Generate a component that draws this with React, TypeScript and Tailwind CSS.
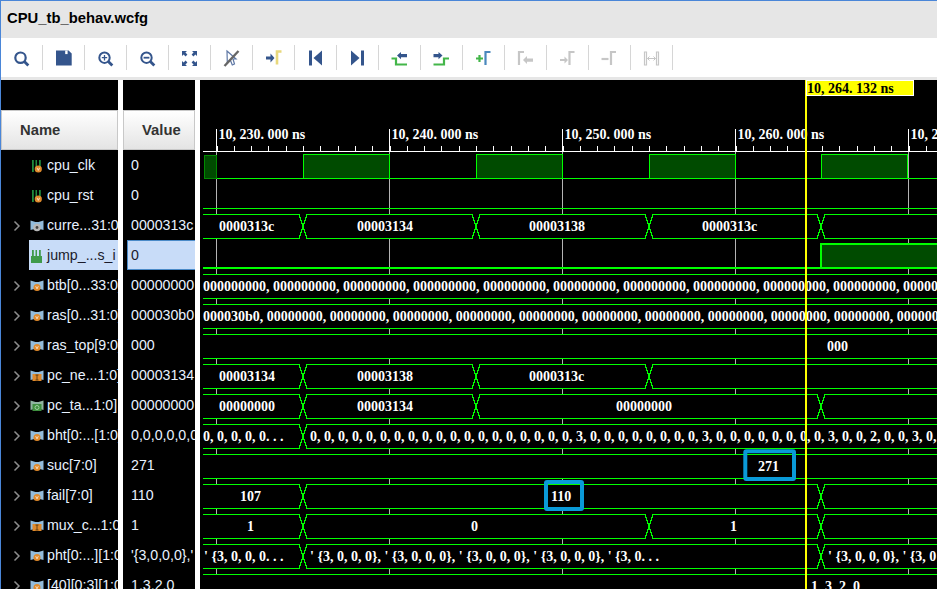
// App.tsx - waveform viewer
const NAVY = '#34558c';
const GREEN = '#43b649';
const GREY = '#c6c6c6';

function Bracket({ x, color }: { x: number; color: string }) {
  return <path d={`M${x} 17V4h5`} fill="none" stroke={color} strokeWidth={2.2} />;
}

const toolIcons = [
  <g key="search" fill="none" stroke={NAVY}>
    <circle cx={9.5} cy={9.7} r={5.2} strokeWidth={2.2} />
    <path d="M13.3 13.6l4 4" strokeWidth={2.8} />
  </g>,
  <g key="save">
    <path d="M3 2.5h12.6l3.1 3.1v12H3z" fill={NAVY} />
    <path d="M12.2 2.5h2.4v3.6h-2.4z" fill="#fff" />
  </g>,
  <g key="zoomin" fill="none" stroke={NAVY}>
    <circle cx={9.5} cy={9.7} r={5.2} strokeWidth={2} />
    <path d="M13.3 13.6l4 4" strokeWidth={2.8} />
    <path d="M6.8 9.7h5.4M9.5 7v5.4" strokeWidth={1.3} />
  </g>,
  <g key="zoomout" fill="none" stroke={NAVY}>
    <circle cx={9.5} cy={9.7} r={5.2} strokeWidth={2} />
    <path d="M13.3 13.6l4 4" strokeWidth={2.8} />
    <path d="M6.6 9.7h5.8" strokeWidth={1.8} />
  </g>,
  <g key="fit" fill={NAVY}>
    <path d="M3 3h5L6.4 4.6 8.4 6.6 6.6 8.4 4.6 6.4 3 8z" />
    <path d="M18 3h-5l1.6 1.6-2 2 1.8 1.8 2-2L18 8z" />
    <path d="M3 18h5l-1.6-1.6 2-2-1.8-1.8-2 2L3 13z" />
    <path d="M18 18h-5l1.6-1.6-2-2 1.8-1.8 2 2L18 13z" />
  </g>,
  <g key="cursor" fill="none">
    <path d="M6 3l9 8h-3l1.5 5-2.2 1-2-5-3 2.5z" stroke="#5f78a5" strokeWidth={1.2} />
    <path d="M3.5 18L17.5 3" stroke="#666" strokeWidth={2.4} />
  </g>,
  <g key="goto">
    <path d="M3 8.5h4.5V5.5l4 4.5-4 4.5v-3H3z" fill={NAVY} />
    <path d="M14 16.5V3.5h4.5" fill="none" stroke="#e8d87c" strokeWidth={2.6} />
  </g>,
  <g key="first" fill={NAVY}>
    <path d="M4 2.5h3v15H4z" />
    <path d="M17 2.5v15L8.5 10z" />
  </g>,
  <g key="last" fill={NAVY}>
    <path d="M14 2.5h3v15h-3z" />
    <path d="M4 2.5v15L12.5 10z" />
  </g>,
  <g key="prev">
    <path d="M2.5 10.5h4.5v6h11" fill="none" stroke={GREEN} strokeWidth={2.2} />
    <path d="M8 7.5l4-3.5v2h6v3.2h-6v2z" fill={NAVY} />
  </g>,
  <g key="next">
    <path d="M2.5 16.5h10.5v-6h5" fill="none" stroke={GREEN} strokeWidth={2.2} />
    <path d="M11.5 7.5l-4-3.5v2h-5v3.2h5v2z" fill={NAVY} />
  </g>,
  <g key="add">
    <path d="M3 10.5h7M6.5 7v7" stroke={GREEN} strokeWidth={2.2} fill="none" />
    <Bracket x={12.5} color="#4a88bd" />
  </g>,
  <g key="prevmark">
    <Bracket x={4} color={GREY} />
    <path d="M8 12l4-4v2.5h6v3.2h-6V16z" fill={GREY} />
  </g>,
  <g key="nextmark">
    <path d="M3 11h4.5V8.5L11 12l-3.5 3.5V13H3z" fill={GREY} />
    <Bracket x={12.5} color={GREY} />
  </g>,
  <g key="removemark">
    <path d="M2.5 11h7" stroke={GREY} strokeWidth={2.2} />
    <Bracket x={12} color={GREY} />
  </g>,
  <g key="swap" fill="none" stroke={GREY}>
    <path d="M3.5 4h2v13h-2zM15.5 4h2v13h-2z" strokeWidth={1.2} />
    <path d="M6.5 10.5h8M8.5 8.5l-2 2 2 2M12.5 8.5l2 2-2 2" strokeWidth={1} />
  </g>,
];

type Kind = 'scalar' | 'sel' | 'gray' | 'v' | 'i' | 'o';

interface Signal {
  name: string;
  value: string;
  kind: Kind;
  bus: boolean;
}

const signals: Signal[] = [
  { name: 'cpu_clk', value: '0', kind: 'scalar', bus: false },
  { name: 'cpu_rst', value: '0', kind: 'scalar', bus: false },
  { name: 'curre...31:0]', value: '0000313c', kind: 'gray', bus: true },
  { name: 'jump_...s_i', value: '0', kind: 'sel', bus: false },
  { name: 'btb[0...33:0]', value: '00000000', kind: 'v', bus: true },
  { name: 'ras[0...31:0]', value: '000030b0', kind: 'v', bus: true },
  { name: 'ras_top[9:0]', value: '000', kind: 'v', bus: true },
  { name: 'pc_ne...1:0]', value: '00003134', kind: 'i', bus: true },
  { name: 'pc_ta...1:0]', value: '00000000', kind: 'o', bus: true },
  { name: 'bht[0:...[1:0]', value: '0,0,0,0,0,0', kind: 'v', bus: true },
  { name: 'suc[7:0]', value: '271', kind: 'v', bus: true },
  { name: 'fail[7:0]', value: '110', kind: 'v', bus: true },
  { name: 'mux_c...1:0]', value: '1', kind: 'i', bus: true },
  { name: 'pht[0:...][1:0]', value: "'{3,0,0,0},'", kind: 'v', bus: true },
  { name: '[40][0:3][1:0]', value: '1,3,2,0', kind: 'v', bus: true },
];

function SignalIcon({ kind }: { kind: Kind }) {
  if (kind === 'scalar' || kind === 'sel') {
    const sel = kind === 'sel';
    return (
      <svg width={14} height={16} viewBox="0 0 14 16" className="shrink-0">
        <path d="M2 2h1.8v12H2zM9 2h1.8v9H9zM5.5 2H7v7H5.5z" fill={sel ? '#3f9a4a' : '#1f8a3c'} />
        {sel ? (
          <path d="M1 8h11v7H1z" fill="#3f9a4a" />
        ) : (
          <>
            <circle cx={8.3} cy={11} r={3.6} fill="#e08a2c" />
            <path d="M7 9.8l1.3 2.6 1.3-2.6" fill="none" stroke="#fff" strokeWidth={0.7} />
          </>
        )}
      </svg>
    );
  }
  const fill = kind === 'o' ? '#8fb5a0' : '#93bcdc';
  return (
    <svg width={14} height={16} viewBox="0 0 14 16" className="shrink-0">
      <path d="M0.5 2.5l5 1.5h3l5-1.5v9.5l-4-1h-5l-4 1z" fill={fill} />
      {kind === 'v' && (
        <>
          <circle cx={7} cy={9.5} r={3.5} fill="#e08a2c" />
          <path d="M5.7 8.2L7 10.8l1.3-2.6" fill="none" stroke="#fff" strokeWidth={0.7} />
        </>
      )}
      {kind === 'gray' && (
        <>
          <circle cx={7} cy={9.5} r={3.8} fill="#b8b8b8" />
          <circle cx={7} cy={9.5} r={1.4} fill="#444" />
        </>
      )}
      {kind === 'i' && (
        <>
          <path d="M2.5 6h9v7h-9z" fill="#e08a2c" />
          <path d="M7 7v5M5.5 7h3M5.5 12h3" stroke="#5a3a10" strokeWidth={0.9} />
        </>
      )}
      {kind === 'o' && (
        <>
          <path d="M2.5 6h9v7h-9z" fill="#3f8f3f" />
          <circle cx={7} cy={9.5} r={2} fill="none" stroke="#a8dca8" strokeWidth={0.9} />
        </>
      )}
    </svg>
  );
}

function NameRow({ signal }: { signal: Signal }) {
  const sel = signal.kind === 'sel';
  return (
    <div className="h-[30px] flex items-center relative overflow-hidden whitespace-nowrap">
      {signal.bus && (
        <svg width={8} height={12} viewBox="0 0 8 12" className="ml-[12px] shrink-0 mt-[2px]">
          <path d="M1.5 1.5L6 6l-4.5 4.5" fill="none" stroke="#8c8c8c" strokeWidth={1.5} />
        </svg>
      )}
      <div
        className={`flex items-center h-[30px] gap-[3px] pl-[1px] pt-[2px] flex-1 ${signal.bus ? 'ml-[8px]' : 'ml-[28px]'} ${sel ? 'bg-[#c8dcf8] text-[#1a1a2a]' : 'text-[#e8f2ff]'}`}
      >
        <SignalIcon kind={signal.kind} />
        <span>{signal.name}</span>
      </div>
    </div>
  );
}

function ValueRow({ signal }: { signal: Signal }) {
  if (signal.kind === 'sel') {
    return (
      <div className="h-[30px] flex items-center ml-[4px] pl-[3px] pt-[2px] bg-[#c8dcf8] border border-r-0 border-[#4a8ac8] text-[#1a1a2a]">
        {signal.value}
      </div>
    );
  }
  return (
    <div className="h-[30px] flex items-center pl-[8px] pt-[2px] whitespace-nowrap overflow-hidden text-[#e8f2ff]">
      {signal.value}
    </div>
  );
}

function Header({ label, pad }: { label: string; pad: string }) {
  return (
    <div
      className={`h-[40px] flex items-center ${pad} bg-gradient-to-b from-white to-[#e4e4e4] border border-[#c8c8c8] font-bold text-[14.8px] text-[#333]`}
    >
      {label}
    </div>
  );
}

const LINE = '#00ff00';
const MAJORS = [216.5, 389.5, 562.5, 735.5, 908.5];
const END = 940;

interface Seg {
  to: number;
  label?: string;
  labelX?: number;
}

function Bus({ top, segs }: { top: number; segs: Seg[] }) {
  const bot = top + 24;
  const mid = top + 12;
  let from = 203;
  return (
    <g>
      {segs.map((s, i) => {
        const x0 = from;
        const x1 = s.to;
        from = s.to;
        const l = i === 0 ? `${x0},${top}` : `${x0},${mid} ${x0 + 4},${top}`;
        const r = x1 >= END ? `${x1},${top}` : `${x1 - 4},${top} ${x1},${mid}`;
        const rb = x1 >= END ? `${x1},${bot}` : `${x1 - 4},${bot}`;
        const lb = i === 0 ? `${x0},${bot}` : `${x0 + 4},${bot} ${x0},${mid}`;
        return (
          <g key={i}>
            <polygon points={`${l} ${r} ${rb} ${lb}`} fill="#000" />
            <polyline points={`${l} ${r}`} fill="none" stroke={LINE} shapeRendering="crispEdges" />
            <polyline
              points={`${x1 >= END ? '' : `${x1},${mid} `}${rb} ${lb}`}
              fill="none"
              stroke={LINE}
              shapeRendering="crispEdges"
            />
            {s.label && (
              <text x={s.labelX} y={top + 16} fill="#fff">
                {s.label}
              </text>
            )}
          </g>
        );
      })}
    </g>
  );
}

const minorTicks = Array.from({ length: 45 }, (_, i) => 216.5 + i * 17.3);
const bht = Array.from({ length: 46 }, (_, i) =>
  [19, 28, 37, 43].includes(i) ? '3' : i === 40 ? '2' : '0',
).join(', ');

function Waves() {
  return (
    <svg
      width={737}
      height={509}
      viewBox="200 80 737 509"
      className="block font-['Liberation_Serif',serif] font-bold text-[14px] whitespace-pre"
    >
      {MAJORS.map((x) => (
        <path key={x} d={`M${x} 151V589`} stroke="#b4b4b4" shapeRendering="crispEdges" />
      ))}

      {/* ruler */}
      <path d="M203 151.5H937" stroke="#fff" shapeRendering="crispEdges" />
      {minorTicks.map((x) => (
        <path key={x} d={`M${Math.round(x) + 0.5} 146V151`} stroke="#fff" shapeRendering="crispEdges" />
      ))}
      {MAJORS.map((x, i) => (
        <g key={x}>
          <path d={`M${x} 129V151`} stroke="#fff" shapeRendering="crispEdges" />
          <text x={x + 2} y={139} fill="#fff">
            {`10, ${230 + i * 10}. 000  ns`}
          </text>
        </g>
      ))}

      {/* clock */}
      <path d="M204.5 155.5H216.5V178.5H204.5Z" fill="#004b00" stroke="#008a00" shapeRendering="crispEdges" />
      {[303.5, 476.5, 649.5, 821.5].map((x) => (
        <path
          key={x}
          d={`M${x} 178.5V154.5H${x + 86}V178.5Z`}
          fill="#004b00"
          stroke={LINE}
          shapeRendering="crispEdges"
        />
      ))}
      <path d="M216.5 178.5H937" stroke={LINE} shapeRendering="crispEdges" />

      {/* reset */}
      <path d="M203 208.5H937" stroke={LINE} shapeRendering="crispEdges" />

      <Bus
        top={214.5}
        segs={[
          { to: 303, label: '0000313c', labelX: 219 },
          { to: 476, label: '00003134', labelX: 357 },
          { to: 649, label: '00003138', labelX: 529 },
          { to: 821, label: '0000313c', labelX: 702 },
          { to: END },
        ]}
      />

      {/* selected scalar */}
      <path d="M821 244H940V269H821Z" fill="#004b00" shapeRendering="crispEdges" />
      <path d="M203 268H821V244H940" fill="none" stroke={LINE} strokeWidth={2} shapeRendering="crispEdges" />
      <path d="M821 268H940" stroke={LINE} strokeWidth={2} shapeRendering="crispEdges" />

      <Bus top={274.5} segs={[{ to: END, label: Array(11).fill('000000000').join(', '), labelX: 203 }]} />
      <Bus
        top={304.5}
        segs={[{ to: END, label: ['000030b0', ...Array(11).fill('00000000')].join(', '), labelX: 203 }]}
      />
      <Bus top={334.5} segs={[{ to: END, label: '000', labelX: 827 }]} />
      <Bus
        top={364.5}
        segs={[
          { to: 303, label: '00003134', labelX: 219 },
          { to: 476, label: '00003138', labelX: 357 },
          { to: 649, label: '0000313c', labelX: 529 },
          { to: END },
        ]}
      />
      <Bus
        top={394.5}
        segs={[
          { to: 303, label: '00000000', labelX: 219 },
          { to: 476, label: '00003134', labelX: 357 },
          { to: 821, label: '00000000', labelX: 616 },
          { to: END },
        ]}
      />
      <Bus
        top={424.5}
        segs={[
          { to: 303, label: '0, 0, 0, 0, 0. . .', labelX: 203 },
          { to: END, label: bht, labelX: 310 },
        ]}
      />
      <Bus top={454.5} segs={[{ to: END, label: '271', labelX: 758 }]} />
      <Bus
        top={484.5}
        segs={[
          { to: 303, label: '107', labelX: 240 },
          { to: 821, label: '110', labelX: 551 },
          { to: END },
        ]}
      />
      <Bus
        top={514.5}
        segs={[
          { to: 303, label: '1', labelX: 247 },
          { to: 649, label: '0', labelX: 471 },
          { to: 821, label: '1', labelX: 730 },
          { to: END },
        ]}
      />
      <Bus
        top={544.5}
        segs={[
          { to: 303, label: "' {3, 0, 0, 0. . .", labelX: 204 },
          {
            to: 821,
            label: "' {3, 0, 0, 0}, ' {3, 0, 0, 0}, ' {3, 0, 0, 0}, ' {3, 0, 0, 0}, ' {3, 0. . .",
            labelX: 310,
          },
          { to: END, label: "' {3, 0, 0, 0}, ' {3, 0", labelX: 828 },
        ]}
      />
      <Bus top={574.5} segs={[{ to: END, label: '1, 3, 2, 0', labelX: 811 }]} />

      {/* annotation boxes drawn on the capture */}
      <rect x={745.3} y={451.3} width={48.7} height={27.7} fill="none" stroke="#0a9ad8" strokeWidth={4} rx={1} />
      <rect x={546} y={482} width={36} height={27} fill="none" stroke="#0a9ad8" strokeWidth={4} rx={1} />

      {/* cursor */}
      <path d="M806 80V589" stroke="#ffff00" strokeWidth={2} shapeRendering="crispEdges" />
      <rect x={806.5} y={80.5} width={107} height={15} fill="#ffff00" stroke="#fff" shapeRendering="crispEdges" />
      <text x={807} y={93} fill="#000">
        10, 264. 132  ns
      </text>
    </svg>
  );
}

export default function App() {
  return (
    <div className="w-[937px] h-[589px] overflow-hidden flex flex-col bg-white border-l border-[#4a86d8] font-['Liberation_Sans',sans-serif]">
      <div className="h-[38px] shrink-0 flex items-center pl-[6px] pb-[2px] bg-[#e6e6e6] border-t border-[#4a86d8] font-bold text-[14.8px] text-black">
        CPU_tb_behav.wcfg
      </div>
      <div className="h-[39px] shrink-0 flex items-center bg-white">
        {toolIcons.map((icon, i) => (
          <div key={i} className="w-[42px] h-[25px] pr-[1px] flex items-center justify-center border-r border-[#d6d6d6]">
            <svg width={20} height={20} viewBox="0 0 20 20">
              {icon}
            </svg>
          </div>
        ))}
      </div>
      <div className="h-[3px] shrink-0 bg-[#e6e6e6]" />
      <div className="flex flex-1 min-h-0 text-[14.2px]">
        <div className="w-[117px] shrink-0 bg-black pt-[30px] overflow-hidden">
          <Header label="Name" pad="pl-[18px]" />
          {signals.map((s) => (
            <NameRow key={s.name} signal={s} />
          ))}
        </div>
        <div className="w-[5px] shrink-0 bg-white" />
        <div className="w-[72px] shrink-0 bg-black pt-[30px] overflow-hidden">
          <Header label="Value" pad="pl-[18px]" />
          {signals.map((s) => (
            <ValueRow key={s.name} signal={s} />
          ))}
        </div>
        <div className="w-[5px] shrink-0 bg-white" />
        <div className="flex-1 bg-black overflow-hidden">
          <Waves />
        </div>
      </div>
    </div>
  );
}
